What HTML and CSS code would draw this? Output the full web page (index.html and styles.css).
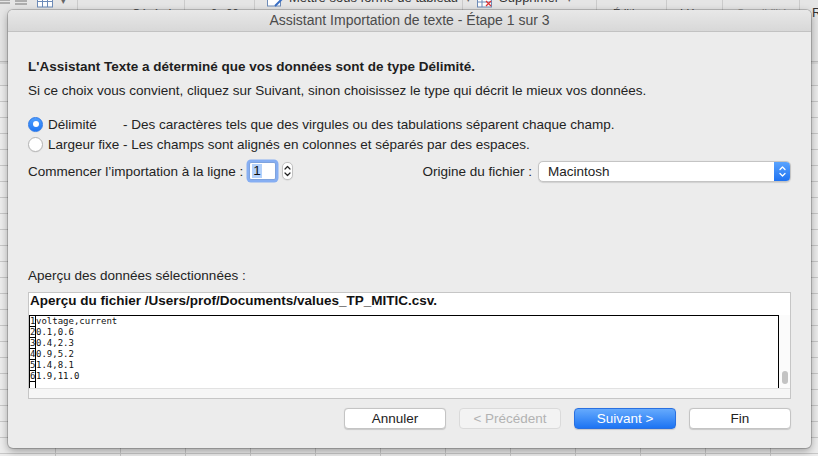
FILE: index.html
```html
<!DOCTYPE html>
<html lang="fr">
<head>
<meta charset="utf-8">
<title>Assistant Importation de texte</title>
<link rel="stylesheet" href="styles.css">
</head>
<body>
<div class="app">
  <div class="ribbon">
    <div class="rg g1">
      <svg class="ic ic-a" width="10" height="8" viewBox="0 0 10 8"><path d="M0 1h10M0 4h10" stroke="#777" stroke-width="1"/></svg>
      <svg class="ic ic-b" width="12" height="8" viewBox="0 0 12 8"><path d="M0 1h12M0 4h12" stroke="#777" stroke-width="1"/></svg>
      <svg class="ic ic-c" width="16" height="8" viewBox="0 0 16 8"><rect x="0.5" y="-3" width="15" height="10" fill="#fff" stroke="#6d8bb8"/><path d="M0 1.5h16M5.5 -3v10M10.5 -3v10" stroke="#6d8bb8"/></svg>
      <span class="caret">▾</span>
    </div>
    <div class="rg g2"><span class="low">Général</span><span class="low caret2">▾</span></div>
    <div class="rg g3"><span class="low">←0 &nbsp;,00</span></div>
    <div class="rg g4">
      <svg class="ic ic-d" width="16" height="8" viewBox="0 0 16 8"><rect x="0.5" y="-3" width="13" height="9" fill="#fff" stroke="#6d8bb8"/><path d="M8 6l7-7" stroke="#3a6fc4" stroke-width="2"/></svg>
      <span class="top">Mettre sous forme de tableau</span><span class="top caret3">▾</span>
    </div>
    <div class="rg g5">
      <svg class="ic ic-d" width="16" height="8" viewBox="0 0 16 8"><rect x="0.5" y="-3" width="14" height="10" fill="#fff" stroke="#6d8bb8"/><path d="M0 2h15M5 -3v10" stroke="#6d8bb8"/><path d="M9 1l5 5M14 1l-5 5" stroke="#d33" stroke-width="1.2"/></svg>
      <span class="top">Supprimer</span><span class="top caret3">▾</span>
    </div>
    <div class="rg g6"><span class="low">Édition</span></div>
    <div class="rg g7"><span class="low">Idées</span></div>
    <div class="rg g8"><span class="low faint">Sensibilité</span></div>
    <div class="rg g9"><span class="rr">R</span></div>
  </div>
  <div class="sheet">
    <div class="colhead"></div>
    <div class="grid"></div>
  </div>

  <div class="dialog">
    <div class="titlebar">Assistant Importation de texte - Étape 1 sur 3</div>
    <div class="content">
      <p class="lead">L'Assistant Texte a déterminé que vos données sont de type Délimité.</p>
      <p class="hint">Si ce choix vous convient, cliquez sur Suivant, sinon choisissez le type qui décrit le mieux vos données.</p>
      <div class="options">
        <div class="opt"><span class="radio on"></span><span class="opt-label">Délimité</span><span class="opt-desc">- Des caractères tels que des virgules ou des tabulations séparent chaque champ.</span></div>
        <div class="opt"><span class="radio"></span><span class="opt-label">Largeur fixe</span><span class="opt-desc">- Les champs sont alignés en colonnes et séparés par des espaces.</span></div>
      </div>
      <div class="start-row">
        <div class="start">
          <span>Commencer l’importation à la ligne :</span>
          <span class="num-input"><span class="sel">1</span></span>
          <span class="stepper"><svg width="9" height="16" viewBox="0 0 9 16"><path d="M2 6l2.5-2.5L7 6M2 10l2.5 2.5L7 10" fill="none" stroke="#222" stroke-width="1.2" stroke-linecap="round" stroke-linejoin="round"/></svg></span>
        </div>
        <div class="origin">
          <span>Origine du fichier :</span>
          <span class="select"><span class="select-val">Macintosh</span><span class="select-arrows"><svg width="9" height="17" viewBox="0 0 9 17"><path d="M2 6.5l2.5-2.5L7 6.5M2 10.5l2.5 2.5L7 10.5" fill="none" stroke="#fff" stroke-width="1.3" stroke-linecap="round" stroke-linejoin="round"/></svg></span></span>
        </div>
      </div>
      <div class="preview-label">Aperçu des données sélectionnées :</div>
      <div class="preview">
        <div class="pv-head">Aperçu du fichier /Users/prof/Documents/values_TP_MITIC.csv.</div>
        <div class="pv-body">
          <div class="pv-data">
            <div class="row"><span class="cell">1</span><span class="txt">voltage,current</span></div>
            <div class="row"><span class="cell">2</span><span class="txt">0.1,0.6</span></div>
            <div class="row"><span class="cell">3</span><span class="txt">0.4,2.3</span></div>
            <div class="row"><span class="cell">4</span><span class="txt">0.9,5.2</span></div>
            <div class="row"><span class="cell">5</span><span class="txt">1.4,8.1</span></div>
            <div class="row"><span class="cell">6</span><span class="txt">1.9,11.0</span></div>
            <div class="row"><span class="cell"></span><span class="txt"></span></div>
          </div>
          <div class="pv-vscroll"><span class="thumb"></span></div>
        </div>
        <div class="pv-hscroll"></div>
      </div>
      <div class="buttons">
        <span class="btn">Annuler</span>
        <span class="btn disabled">&lt; Précédent</span>
        <span class="btn primary">Suivant &gt;</span>
        <span class="btn">Fin</span>
      </div>
    </div>
  </div>
</div>
</body>
</html>
```

FILE: styles.css
```css
* { box-sizing: border-box; margin: 0; padding: 0; }
html, body { width: 818px; height: 456px; overflow: hidden; }
body {
  font-family: "Liberation Sans", Arial, sans-serif;
  font-size: 13px;
  color: #232323;
  background: #e9e9e9;
}
.app { position: relative; width: 818px; height: 456px; overflow: hidden; }

/* background Excel window */
.ribbon {
  height: 62px;
  background: #e5e5e5;
  border-bottom: 1px solid #bdbdbd;
  display: flex;
  align-items: flex-start;
  overflow: hidden;
}
.rg {
  height: 30px;
  border-right: 1px solid #cbcbcb;
  display: flex;
  align-items: flex-start;
  flex-shrink: 0;
  color: #3a3a3a;
}
.g1 { width: 78px; }
.g2 { width: 107px; padding-left: 54px; }
.g3 { width: 70px; padding-left: 15px; }
.g4 { width: 208px; padding-left: 12px; }
.g5 { width: 134px; padding-left: 14px; }
.g6 { width: 70px; padding-left: 16px; }
.g7 { width: 56px; padding-left: 13px; }
.g8 { width: 77px; padding-left: 14px; }
.g9 { width: 18px; border-right: 0; padding-left: 12px; }
.ic { display: block; flex-shrink: 0; }
.ic-a { margin-left: 0; margin-top: -1px; }
.ic-b { margin-left: 5px; margin-top: 0; }
.ic-c { margin-left: 10px; margin-top: 0; }
.ic-d { margin-top: 0; margin-right: 6px; }
.caret { font-size: 9px; line-height: 9px; margin-left: 8px; margin-top: -3px; color: #666; }
.low { font-size: 11px; line-height: 12px; margin-top: 7px; color: #444; white-space: nowrap; }
.caret2 { margin-left: 12px; font-size: 9px; }
.faint { color: #9a9a9a; }
.top { font-size: 13px; line-height: 14px; margin-top: -9px; white-space: nowrap; color: #333; }
.caret3 { font-size: 9px; margin-left: 8px; margin-top: -8px; color: #666; }
.rr { font-size: 13px; line-height: 14px; margin-top: 6px; color: #333; }

.sheet { background: #ececec; height: 394px; }
.colhead { height: 24px; border-top: 2px solid #d8d8d8; border-bottom: 1px solid #c6c6c6; background: #e8e8e8; }
.grid {
  height: 370px;
  background-color: #ededed;
  background-image:
    linear-gradient(#c8c8c8 1px, transparent 1px),
    linear-gradient(90deg, #c8c8c8 1px, transparent 1px);
  background-size: 100% 16px, 65px 100%;
  background-position: 0 15px, 55px 0;
}

/* dialog window */
.dialog {
  position: absolute;
  left: 8px;
  top: 10px;
  width: 803px;
  height: 438px;
  background: #ececec;
  border-radius: 5px;
  overflow: hidden;
  font-size: 13.5px;
  box-shadow: 0 0 0 1px rgba(0,0,0,0.18), 0 3px 9px rgba(0,0,0,0.35);
}
.titlebar {
  height: 22px;
  line-height: 21px;
  text-align: center;
  color: #4b4b4b;
  font-size: 14px;
  background: linear-gradient(#e8e8e8, #d8d8d8);
  border-bottom: 1px solid #c2c2c2;
}
.content {
  padding: 27px 20px 0 20px;
  display: flex;
  flex-direction: column;
}
.lead { font-weight: bold; line-height: 16px; color: #1e1e1e; }
.hint { margin-top: 8px; line-height: 16px; }
.options { margin-top: 15px; }
.opt { display: flex; align-items: center; height: 20px; }
.radio {
  width: 15px; height: 15px;
  border-radius: 50%;
  border: 1px solid #b4b4b4;
  background: #fff;
  margin-right: 5px;
  flex-shrink: 0;
  box-shadow: 0 0.5px 1px rgba(0,0,0,0.08);
}
.radio.on {
  border-color: #2c78e8;
  background: linear-gradient(#4e9dfd, #1f77f3);
  display: flex; align-items: center; justify-content: center;
}
.radio.on::after { content: ""; width: 6px; height: 6px; border-radius: 50%; background: #fff; }
.opt-label { width: 75px; flex-shrink: 0; white-space: nowrap; }
.opt-desc { white-space: nowrap; }

.start-row {
  margin-top: 5px;
  height: 24px;
  display: flex;
  align-items: center;
  justify-content: space-between;
}
.start { display: flex; align-items: center; }
.num-input {
  width: 27px; height: 18px;
  margin-left: 6px;
  background: #fff;
  border: 1px solid #7fa3dd;
  border-radius: 2px;
  box-shadow: 0 0 0 2.5px #86aef2;
  display: flex; align-items: center;
  padding-left: 2px;
  line-height: 14px;
}
.sel { background: #b3d1fb; padding: 0 1px; color: #111; }
.stepper {
  width: 11px; height: 18px;
  margin-left: 6px;
  background: #fff;
  border: 1px solid #c2c2c2;
  border-radius: 5px;
  display: flex; align-items: center; justify-content: center;
  box-shadow: 0 0.5px 1px rgba(0,0,0,0.1);
}
.stepper svg { display: block; }
.origin { display: flex; align-items: center; }
.select {
  width: 253px; height: 21px;
  margin-left: 6px;
  background: #fff;
  border: 1px solid #c4c4c4;
  border-radius: 5px;
  display: flex; align-items: center; justify-content: space-between;
  padding-left: 9px;
  box-shadow: 0 0.5px 1px rgba(0,0,0,0.12);
  overflow: hidden;
}
.select-arrows {
  width: 17px; height: 21px;
  margin-right: -1px;
  background: linear-gradient(#5da6ff, #1c70f1);
  border-radius: 0 5px 5px 0;
  display: flex; align-items: center; justify-content: center;
}
.select-arrows svg { display: block; }

.preview-label { margin-top: 85px; line-height: 16px; }
.preview {
  margin-top: 8px;
  height: 107px;
  border: 1px solid #c6c6c6;
  background: #fff;
  display: flex;
  flex-direction: column;
}
.pv-head { height: 22px; line-height: 16px; font-weight: bold; padding-left: 1px; color: #111; white-space: nowrap; }
.pv-body { height: 73px; display: flex; }
.pv-data {
  width: 750px;
  border-top: 1px solid #000;
  border-right: 1px solid #000;
  overflow: hidden;
  font-family: "DejaVu Sans Mono", "Liberation Mono", monospace;
  font-size: 9px;
  color: #111;
}
.row { display: flex; height: 11px; line-height: 10px; }
.cell {
  width: 7px;
  border: 1px solid #000;
  border-top: 0;
  text-align: center;
  flex-shrink: 0;
}
.txt { white-space: pre; }
.pv-vscroll {
  flex: 1;
  background: #fbfbfb;
  display: flex;
  flex-direction: column;
  justify-content: flex-end;
  padding: 0 0 4px 3px;
}
.thumb { width: 6px; height: 13px; border-radius: 3px; background: #c3c3c3; }
.pv-hscroll { height: 10px; background: #f6f6f6; border-top: 1px solid #e2e2e2; }

.buttons {
  margin-top: 9px;
  display: flex;
  justify-content: flex-end;
  gap: 13px;
}
.btn {
  width: 102px; height: 21px;
  border-radius: 4px;
  background: #fff;
  border: 1px solid #c4c4c4;
  box-shadow: 0 0.5px 1px rgba(0,0,0,0.15);
  text-align: center;
  line-height: 19px;
  color: #222;
}
.btn.disabled { background: #f3f3f3; color: #b2b2b2; border-color: #dadada; box-shadow: none; }
.btn.primary { background: linear-gradient(#65aafd, #1d74f3); border-color: #2a70e0; color: #fff; }
```
